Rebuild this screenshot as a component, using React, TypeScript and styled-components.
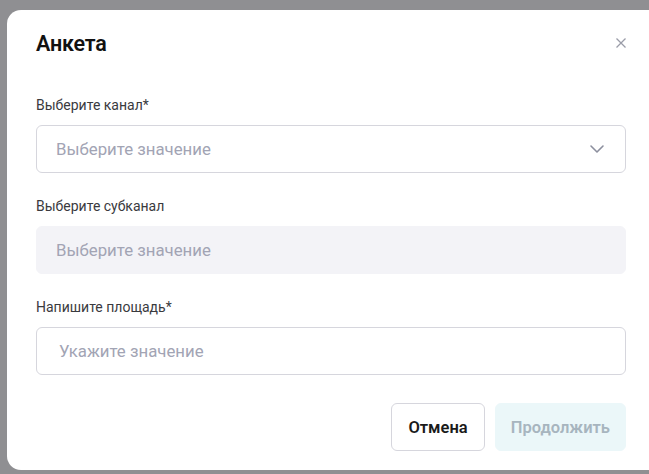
import React from "react";
import styled, { createGlobalStyle } from "styled-components";

const GlobalStyle = createGlobalStyle`
  html, body {
    margin: 0;
    padding: 0;
    background: #8f8f92;
    font-family: Roboto, "Noto Sans", sans-serif;
  }
`;

const Overlay = styled.div`
  width: 649px;
  height: 474px;
  overflow: hidden;
  padding: 10px 0 0 7px;
  box-sizing: border-box;
`;

const Modal = styled.div`
  width: 660px;
  height: 460px;
  background: #fff;
  border-radius: 14px;
  box-sizing: border-box;
  padding: 20px 0 0 29px;
  display: flex;
  flex-direction: column;
`;

const Inner = styled.div`
  width: 590px;
  display: flex;
  flex-direction: column;
`;

const Header = styled.div`
  display: flex;
  align-items: center;
  justify-content: space-between;
  height: 26px;
  margin-bottom: 40px;
`;

const Title = styled.h2`
  margin: 0;
  font-size: 21.5px;
  font-weight: 600;
  color: #111;
  letter-spacing: -0.2px;
`;

const Close = styled.button`
  border: none;
  background: none;
  padding: 0;
  margin-right: -1px;
  width: 12px;
  height: 12px;
  display: flex;
  cursor: pointer;
`;

const Field = styled.div`
  display: flex;
  flex-direction: column;
  margin-bottom: 24px;
`;

const Label = styled.label`
  font-size: 14px;
  color: #3a3a3e;
  height: 18px;
  line-height: 18px;
  margin-bottom: 11px;
`;

const Box = styled.div<{ $disabled?: boolean; $indent?: number }>`
  height: 48px;
  box-sizing: border-box;
  border-radius: 6px;
  border: 1px solid ${(p) => (p.$disabled ? "#f3f3f7" : "#d6d6dd")};
  background: ${(p) => (p.$disabled ? "#f3f3f7" : "#fff")};
  display: flex;
  align-items: center;
  justify-content: space-between;
  padding: 0 20px 0 ${(p) => p.$indent ?? 19}px;
  font-size: 16.8px;
  color: #a2a4b4;
`;

const Footer = styled.div`
  display: flex;
  justify-content: flex-end;
  gap: 10px;
  margin-top: 4px;
`;

const Button = styled.button<{ $primary?: boolean }>`
  height: 48px;
  box-sizing: border-box;
  border-radius: 6px;
  font-family: inherit;
  font-size: 16.5px;
  font-weight: 600;
  padding: 0 ${(p) => (p.$primary ? 15 : 16)}px;
  border: 1px solid ${(p) => (p.$primary ? "#ebf7f9" : "#d6d6dd")};
  background: ${(p) => (p.$primary ? "#ebf7f9" : "#fff")};
  color: ${(p) => (p.$primary ? "#a7b5bf" : "#1a1a1a")};
`;

const Chevron = () => (
  <svg width="16" height="10" viewBox="0 0 16 10" fill="none">
    <path d="M2 2l6 6 6-6" stroke="#8c8f9e" strokeWidth="1.6" strokeLinecap="round" strokeLinejoin="round" />
  </svg>
);

export default function App() {
  return (
    <>
      <GlobalStyle />
      <Overlay>
        <Modal>
          <Inner>
            <Header>
              <Title>Анкета</Title>
              <Close aria-label="close">
                <svg width="12" height="12" viewBox="0 0 12 12">
                  <path d="M1.5 1.5l9 9M10.5 1.5l-9 9" stroke="#9a9ca8" strokeWidth="1.3" />
                </svg>
              </Close>
            </Header>
            <Field>
              <Label>Выберите канал*</Label>
              <Box>
                Выберите значение
                <Chevron />
              </Box>
            </Field>
            <Field>
              <Label>Выберите субканал</Label>
              <Box $disabled>Выберите значение</Box>
            </Field>
            <Field>
              <Label>Напишите площадь*</Label>
              <Box $indent={22}>Укажите значение</Box>
            </Field>
            <Footer>
              <Button>Отмена</Button>
              <Button $primary>Продолжить</Button>
            </Footer>
          </Inner>
        </Modal>
      </Overlay>
    </>
  );
}
